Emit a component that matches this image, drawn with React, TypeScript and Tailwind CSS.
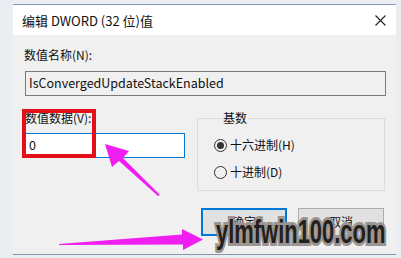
import React from "react";

const font = "font-['Noto_Sans_CJK_SC','Noto_Sans',sans-serif]";

function Radio({ checked, label }: { checked?: boolean; label: string }) {
  return (
    <div className="flex items-center h-[18px]">
      <div className="w-[13px] h-[13px] rounded-full border border-[#333] bg-[#f0f0f0] flex items-center justify-center">
        {checked && <div className="w-[7px] h-[7px] rounded-full bg-[#333]" />}
      </div>
      <span className="ml-[3px] text-[12px] leading-[18px] text-[#111]">{label}</span>
    </div>
  );
}

export default function App() {
  return (
    <div className={`w-[401px] h-[258px] bg-[#e9eef3] relative overflow-hidden ${font}`}>
      <div className="ml-[13px] mt-[4px] w-[383px] border-t border-b border-[#8497ad] bg-[#f0f0f0] flex flex-col">
        <div className="h-[30px] bg-white flex items-center justify-between pl-[9px] pr-[10px]">
          <span className="text-[13px] leading-[18px] text-[#111] mt-[2px]">编辑 DWORD (32 位)值</span>
          <svg width="11" height="11" viewBox="0 0 11 11" className="mt-[1px]">
            <path d="M0.5 0.5 L10.5 10.5 M10.5 0.5 L0.5 10.5" stroke="#222" strokeWidth="1.1" fill="none" />
          </svg>
        </div>
        <div className="h-[219px] pl-[12px] pt-[11px] flex flex-col">
          <div className="h-[18px] leading-[18px] text-[12px] text-[#111] -ml-px">数值名称(N):</div>
          <div className="mt-[7px] w-[361px] h-[25px] border border-[#7a7a7a] bg-[#f0f0f0] flex items-center pl-[3px] text-[12.5px] text-[#111]">
            IsConvergedUpdateStackEnabled
          </div>
          <div className="flex mt-[13px]">
            <div className="flex flex-col w-[160px]">
              <div className="h-[18px] leading-[18px] text-[12px] text-[#111]">数值数据(V):</div>
              <div className="mt-[6px] w-[160px] h-[25px] border border-[#0078d7] bg-white flex items-center pl-[3px] text-[12.5px] text-[#111]">
                0
              </div>
            </div>
            <fieldset className="ml-[12px] w-[188px] h-[82px] border border-[#dcdcdc] pl-[16px]">
              <legend className="ml-[8px] px-px text-[12px] leading-[18px] text-[#111]">基数</legend>
              <div className="mt-[9px] flex flex-col gap-[9px]">
                <Radio checked label="十六进制(H)" />
                <Radio label="十进制(D)" />
              </div>
            </fieldset>
          </div>
          <div className="flex justify-end gap-[11px] mr-[12px] mt-[17px]">
            <div className="w-[86px] h-[28px] border-2 border-[#0078d7] bg-[#e1e1e1] flex items-center justify-center text-[12px] text-[#111]">
              确定
            </div>
            <div className="w-[86px] h-[28px] border border-[#adadad] bg-[#e1e1e1] flex items-center justify-center text-[12px] text-[#111]">
              取消
            </div>
          </div>
        </div>
      </div>

      <div className="absolute left-[22px] top-[109px] w-[74px] h-[49px] border-[4px] border-[#e3101a]" />

      <svg className="absolute left-0 top-0 pointer-events-none" width="401" height="258" viewBox="0 0 401 258">
        <polygon
          points="160,195 123,158 129,151 105,144 112,167 119,161 158,196"
          fill="#f01ef0"
        />
        <polygon
          points="59,244 182,234.5 182,229 203,239.5 183,250 183,244.5 59,245"
          fill="#f01ef0"
        />
      </svg>

      <div className="absolute left-[216px] top-[208px] w-[185px] h-[46px] flex items-center justify-start pointer-events-none">
        <span className="font-['Liberation_Sans',Arial,sans-serif] font-bold text-[34px] leading-[42px] text-[#231f1c] origin-left scale-x-[0.645] whitespace-nowrap [-webkit-text-stroke:6px_#9c948f] [paint-order:stroke_fill]">
          ylmfwin100.com
        </span>
      </div>
    </div>
  );
}
